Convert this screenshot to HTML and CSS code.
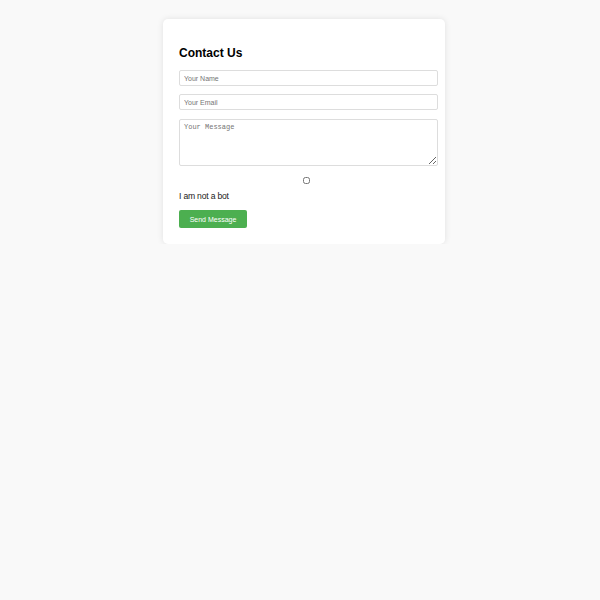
FILE: index.html
```html
<!DOCTYPE html>
<html>
<head>
<meta charset="utf-8">
<link rel="stylesheet" href="styles.css">
</head>
<body>
<div class="card">
  <h2 class="title">Contact Us</h2>
  <form class="form">
    <input class="field" type="text" placeholder="Your Name">
    <input class="field" type="email" placeholder="Your Email">
    <textarea class="field area" placeholder="Your Message"></textarea>
    <div class="check-row"><input class="check" type="checkbox"></div>
    <label class="bot">I am not a bot</label>
    <button class="send" type="button">Send Message</button>
  </form>
</div>
</body>
</html>
```
FILE: styles.css
```css
html, body { background: #f9f9f9; }
body {
  margin: 0 0 0 8px;
  font-family: "Liberation Sans", Arial, sans-serif;
}
.card {
  width: 250px;
  margin: 19px auto 0;
  padding: 27px 16px 16px;
  background: #fff;
  border-radius: 5px;
  box-shadow: 0 0 6px rgba(0,0,0,0.1);
}
.title {
  margin: 0 0 10px;
  font-size: 12px;
  line-height: 14px;
  font-weight: bold;
  color: #000;
}
.form { display: flex; flex-direction: column; align-items: flex-start; }
.field {
  box-sizing: border-box;
  width: 259px;
  height: 16px;
  margin: 0 0 8px;
  padding: 0 4px;
  border: 1px solid #dddddd;
  border-radius: 2px;
  font-family: "Liberation Sans", Arial, sans-serif;
  font-size: 7px;
  outline: none;
}
.field::placeholder { color: #757575; }
.area {
  height: 47px;
  margin-top: 1px;
  padding: 3px 4px;
  font-family: "Liberation Mono", monospace;
  font-size: 7px;
  resize: vertical;
}
.check-row { width: 254px; display: flex; justify-content: center; margin-top: 3px; }
.check { width: 7px; height: 7px; margin: 0; }
.bot {
  margin-top: 7px;
  font-size: 8.6px;
  line-height: 11px;
  font-weight: normal;
  letter-spacing: -0.2px;
  color: #1a1a1a;
}
.send {
  margin-top: 8px;
  width: 68px;
  height: 18px;
  padding: 0;
  border: none;
  border-radius: 2px;
  background: #4caf50;
  color: #fff;
  font-family: "Liberation Sans", Arial, sans-serif;
  font-size: 7px;
}
```
